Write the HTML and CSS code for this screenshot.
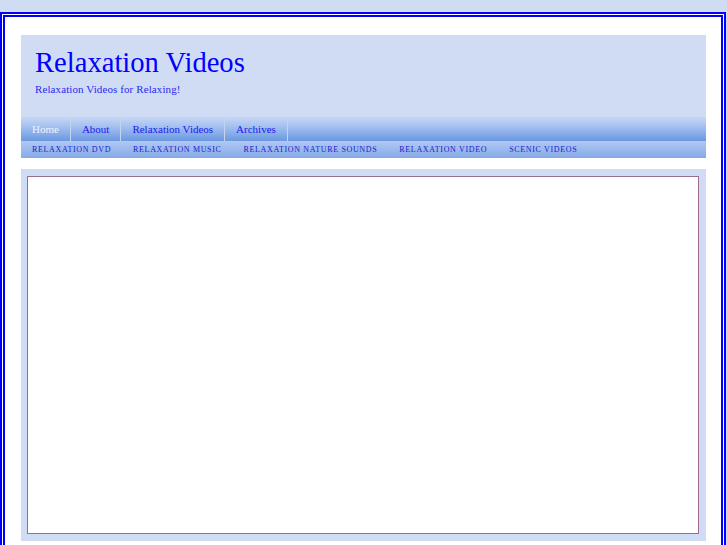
FILE: index.html
```html
<!DOCTYPE html>
<html>
<head>
<meta charset="utf-8">
<title>Relaxation Videos</title>
<link rel="stylesheet" href="styles.css">
</head>
<body>
<div class="page">
  <div class="header">
    <h1 class="title">Relaxation Videos</h1>
    <p class="tagline">Relaxation Videos for Relaxing!</p>
  </div>
  <ul class="nav">
    <li class="current"><a href="#">Home</a></li>
    <li><a href="#">About</a></li>
    <li><a href="#">Relaxation Videos</a></li>
    <li><a href="#">Archives</a></li>
  </ul>
  <ul class="subnav">
    <li><a href="#">Relaxation DVD</a></li>
    <li><a href="#">Relaxation Music</a></li>
    <li><a href="#">Relaxation Nature Sounds</a></li>
    <li><a href="#">Relaxation Video</a></li>
    <li><a href="#">Scenic Videos</a></li>
  </ul>
  <div class="content">
    <div class="frame"></div>
  </div>
</div>
</body>
</html>
```

FILE: styles.css
```css
html, body {
  margin: 0;
  padding: 0;
}
body {
  background: #d0dcf4;
  font-family: "Liberation Serif", "Times New Roman", serif;
  overflow: hidden;
}
.page {
  box-sizing: border-box;
  width: 726px;
  margin-top: 12px;
  border: 5px double #0000ff;
  border-bottom: none;
  background: #ffffff;
  padding: 18px 15px 40px 16px;
}
.header {
  background: #d0dcf4;
  height: 82px;
  box-sizing: border-box;
  padding: 12px 0 0 14px;
}
.title {
  margin: 0;
  font-size: 28.6px;
  line-height: 32px;
  font-weight: normal;
  color: #0000ff;
}
.tagline {
  margin: 3px 0 0 0;
  font-size: 11px;
  line-height: 14px;
  letter-spacing: 0.1px;
  color: #2a2af0;
}
.nav, .subnav {
  list-style: none;
  margin: 0;
  padding: 0;
  display: flex;
}
.nav {
  height: 24px;
  background: linear-gradient(to bottom, #c6d7f5 0%, #a8c3f0 35%, #6a98e1 100%);
}
.nav li {
  border-right: 1px solid #c4d4ef;
}
.nav a {
  display: block;
  padding: 0 11px;
  line-height: 24px;
  font-size: 11px;
  color: #1a1aee;
  text-decoration: none;
}
.nav .current a {
  color: #eef3ff;
}
.subnav {
  height: 17px;
  background: linear-gradient(to bottom, #b0c9f2 0%, #9bb9ee 50%, #85a9e8 100%);
}
.subnav a {
  display: block;
  padding: 0 11px;
  line-height: 17px;
  font-size: 8px;
  letter-spacing: 0.65px;
  text-transform: uppercase;
  color: #1a1acf;
  text-decoration: none;
}
.content {
  margin-top: 11px;
  background: #d0dcf4;
  padding: 7px 7px 7px 6px;
}
.frame {
  height: 356px;
  background: #ffffff;
  border: 1px solid #9b6c8b;
}
```
